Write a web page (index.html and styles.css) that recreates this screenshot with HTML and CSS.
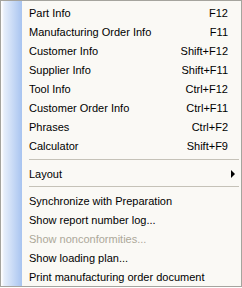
FILE: index.html
```html
<!DOCTYPE html>
<html lang="en">
<head>
    <meta charset="UTF-8">
    <title>Context menu</title>
    <link rel="stylesheet" href="styles.css">
</head>
<body>
    <div class="menu">
        <div class="item"><span>Part Info</span><span class="key">F12</span></div>
        <div class="item"><span>Manufacturing Order Info</span><span class="key">F11</span></div>
        <div class="item"><span>Customer Info</span><span class="key">Shift+F12</span></div>
        <div class="item"><span>Supplier Info</span><span class="key">Shift+F11</span></div>
        <div class="item"><span>Tool Info</span><span class="key">Ctrl+F12</span></div>
        <div class="item"><span>Customer Order Info</span><span class="key">Ctrl+F11</span></div>
        <div class="item"><span>Phrases</span><span class="key">Ctrl+F2</span></div>
        <div class="item"><span>Calculator</span><span class="key">Shift+F9</span></div>
        <div class="sep first"></div>
        <div class="item sub"><span>Layout</span><span class="arrow"></span></div>
        <div class="sep"></div>
        <div class="item"><span>Synchronize with Preparation</span></div>
        <div class="item"><span>Show report number log...</span></div>
        <div class="item disabled"><span>Show nonconformities...</span></div>
        <div class="item"><span>Show loading plan...</span></div>
        <div class="item"><span>Print manufacturing order document</span></div>
    </div>
</body>
</html>
```

FILE: styles.css
```css
body {
    margin: 0;
    font-family: 'Liberation Sans', Arial, sans-serif;
    font-size: 11px;
    color: #000;
    background: #fff;
}
.menu {
    width: 242px;
    height: 287px;
    box-sizing: border-box;
    border: 1px solid #a5a49e;
    padding: 2px 2px 0 1px;
    background-color: #faf9f5;
    background-image: linear-gradient(to right, #fdfdfe 0, #fdfdfe 1px, #e7effb 3px, #a8c4f0 21px);
    background-size: 21px 100%;
    background-repeat: no-repeat;
}
.item {
    height: 19px;
    display: flex;
    align-items: center;
    justify-content: space-between;
    padding-left: 27px;
    padding-right: 11px;
    white-space: nowrap;
}
.item.disabled {
    color: #aca899;
}
.item.sub {
    padding-right: 4px;
}
.arrow {
    width: 0;
    height: 0;
    border-top: 4px solid transparent;
    border-bottom: 4px solid transparent;
    border-left: 4px solid #000;
}
.sep {
    height: 1px;
    margin: 3px 0 4px 27px;
    background: #c5c2b8;
}
.sep.first {
    margin-top: 4px;
}
```
